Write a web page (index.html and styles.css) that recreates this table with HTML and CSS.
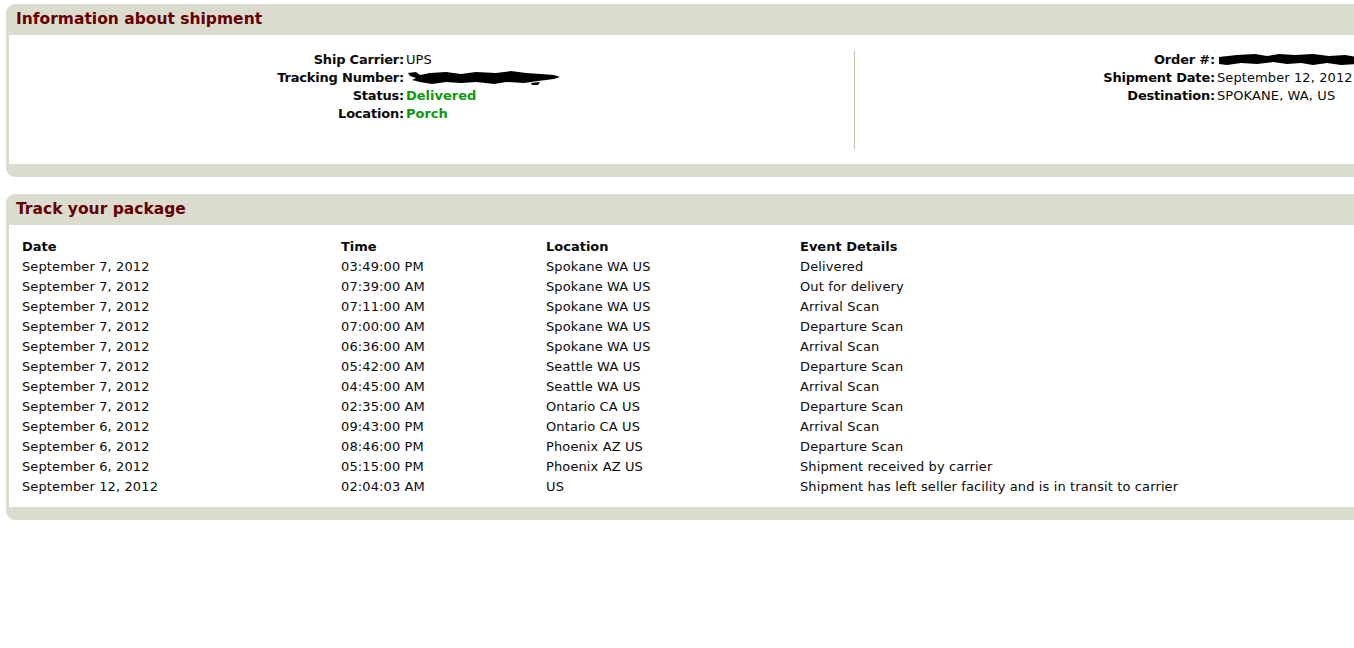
FILE: index.html
```html
<!DOCTYPE html>
<html>
<head>
<meta charset="utf-8">
<title>Shipment tracking</title>
<link rel="stylesheet" href="styles.css">
</head>
<body>
<div class="page">
  <section class="panel">
    <h2 class="panel-title">Information about shipment</h2>
    <div class="panel-body info">
      <div class="info-half info-left">
        <div class="info-grid grid-left">
          <div class="lbl">Ship Carrier:</div><div class="val">UPS</div>
          <div class="lbl">Tracking Number:</div>
          <div class="val"><svg class="redact" width="156" height="16" viewBox="0 0 156 16"><path d="M2 3 L10 2 L14 5 L24 3 L40 2 L55 4 L70 2 L90 3 L105 1 L120 3 L135 4 L148 5 L154 7 L148 9 L132 11 L118 13 L100 12 L88 14 L70 12 L55 13 L40 12 L26 14 L14 12 L6 10 L10 8 L4 6 Z" fill="#000"/><path d="M125 13 L134 12 L132 15 L126 15 Z" fill="#000"/></svg></div>
          <div class="lbl">Status:</div><div class="val green">Delivered</div>
          <div class="lbl">Location:</div><div class="val green">Porch</div>
        </div>
      </div>
      <div class="info-half info-right">
        <div class="info-grid grid-right">
          <div class="lbl">Order #:</div>
          <div class="val"><svg class="redact" width="140" height="16" viewBox="0 0 140 16"><path d="M2 5 L20 3 L38 2 L50 4 L62 2 L78 3 L96 2 L112 4 L128 3 L140 5 L140 12 L124 13 L110 11 L96 13 L84 11 L70 12 L56 10 L40 12 L24 11 L10 13 L2 12 Z" fill="#000"/></svg></div>
          <div class="lbl">Shipment Date:</div><div class="val">September 12, 2012</div>
          <div class="lbl">Destination:</div><div class="val">SPOKANE, WA, US</div>
        </div>
      </div>
    </div>
  </section>

  <section class="panel panel-track">
    <h2 class="panel-title">Track your package</h2>
    <div class="panel-body track">
      <table class="events">
        <thead>
          <tr><th class="c-date">Date</th><th class="c-time">Time</th><th class="c-loc">Location</th><th>Event Details</th></tr>
        </thead>
        <tbody>
          <tr><td>September 7, 2012</td><td>03:49:00 PM</td><td>Spokane WA US</td><td>Delivered</td></tr>
          <tr><td>September 7, 2012</td><td>07:39:00 AM</td><td>Spokane WA US</td><td>Out for delivery</td></tr>
          <tr><td>September 7, 2012</td><td>07:11:00 AM</td><td>Spokane WA US</td><td>Arrival Scan</td></tr>
          <tr><td>September 7, 2012</td><td>07:00:00 AM</td><td>Spokane WA US</td><td>Departure Scan</td></tr>
          <tr><td>September 7, 2012</td><td>06:36:00 AM</td><td>Spokane WA US</td><td>Arrival Scan</td></tr>
          <tr><td>September 7, 2012</td><td>05:42:00 AM</td><td>Seattle WA US</td><td>Departure Scan</td></tr>
          <tr><td>September 7, 2012</td><td>04:45:00 AM</td><td>Seattle WA US</td><td>Arrival Scan</td></tr>
          <tr><td>September 7, 2012</td><td>02:35:00 AM</td><td>Ontario CA US</td><td>Departure Scan</td></tr>
          <tr><td>September 6, 2012</td><td>09:43:00 PM</td><td>Ontario CA US</td><td>Arrival Scan</td></tr>
          <tr><td>September 6, 2012</td><td>08:46:00 PM</td><td>Phoenix AZ US</td><td>Departure Scan</td></tr>
          <tr><td>September 6, 2012</td><td>05:15:00 PM</td><td>Phoenix AZ US</td><td>Shipment received by carrier</td></tr>
          <tr><td>September 12, 2012</td><td>02:04:03 AM</td><td>US</td><td>Shipment has left seller facility and is in transit to carrier</td></tr>
        </tbody>
      </table>
    </div>
  </section>
</div>
</body>
</html>
```

FILE: styles.css
```css
html, body {
  overflow: hidden;
}
body {
  margin: 4px 0 0 6px;
  background: #fff;
  font-family: "DejaVu Sans", Verdana, sans-serif;
  font-size: 13px;
  color: #0a0a0a;
}
.page {
  width: 1420px;
}
.panel {
  background: #dcdcce;
  border-radius: 9px 0 0 9px;
  padding: 0 0 13px 3px;
}
.panel-track {
  margin-top: 17px;
}
.panel-title {
  margin: 0;
  height: 31px;
  line-height: 31px;
  padding-left: 7px;
  font-size: 15.5px;
  font-weight: bold;
  color: #650000;
}
.panel-body {
  background: #fff;
}
.info {
  display: flex;
  height: 129px;
  padding-top: 15px;
  box-sizing: border-box;
  align-items: flex-start;
}
.info-half {
  height: 100px;
}
.info-left {
  width: 845px;
  border-right: 1px solid #c9c2ab;
}
.info-grid {
  display: grid;
  column-gap: 2px;
  grid-auto-rows: 18px;
  line-height: 18px;
  padding-top: 1px;
}
.grid-left {
  grid-template-columns: 395px auto;
}
.grid-right {
  grid-template-columns: 360px auto;
}
.lbl {
  text-align: right;
  font-weight: bold;
  letter-spacing: -0.2px;
}
.val {
  white-space: nowrap;
  display: flex;
  align-items: center;
  letter-spacing: 0.1px;
}
.green {
  color: #0e9a0e;
  font-weight: bold;
  letter-spacing: 0;
}
.redact {
  display: block;
}
.track {
  padding: 12px 0 10px 13px;
}
.events {
  border-collapse: collapse;
  font-size: 13px;
}
.events th, .events td {
  padding: 0;
  height: 20px;
  line-height: 20px;
  text-align: left;
  white-space: nowrap;
  vertical-align: middle;
}
.events td {
  letter-spacing: 0.12px;
}
.events th {
  font-weight: bold;
}
.c-date { width: 319px; }
.c-time { width: 205px; }
.c-loc { width: 254px; }
```
